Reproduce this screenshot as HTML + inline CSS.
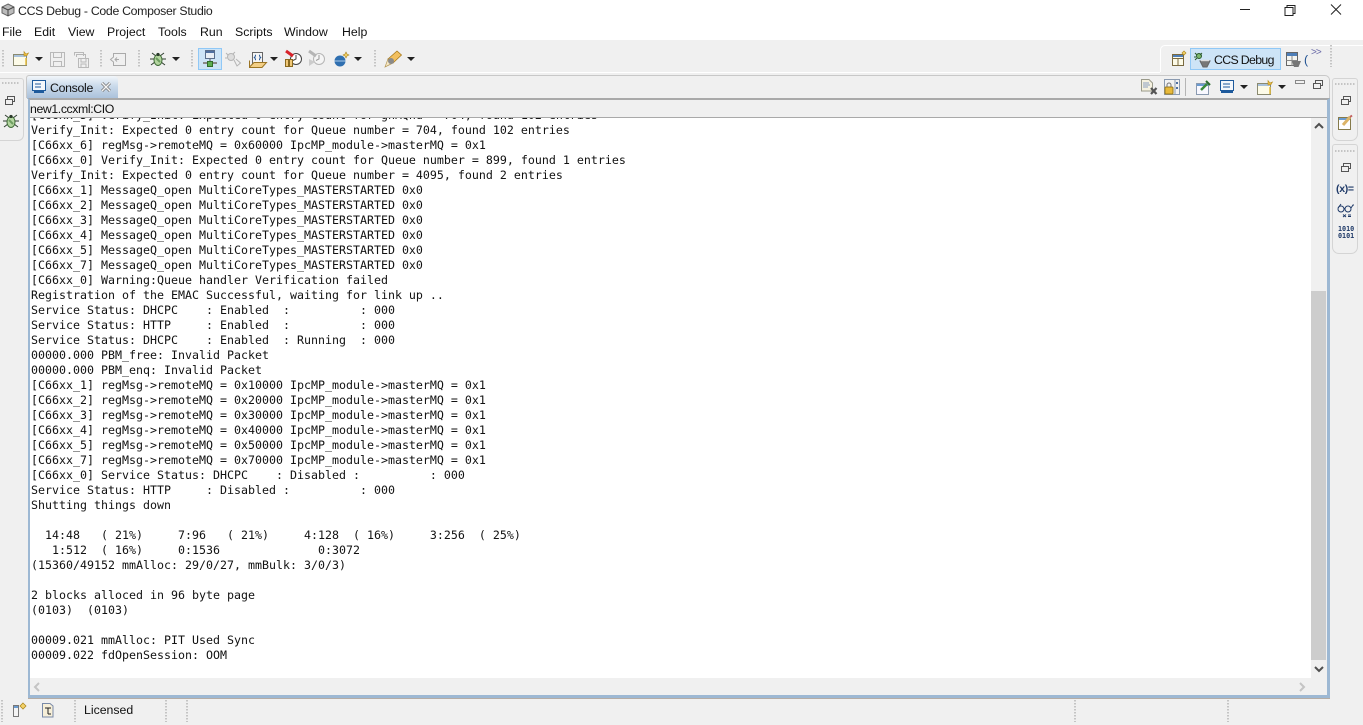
<!DOCTYPE html>
<html><head><meta charset="utf-8"><style>
html,body{margin:0;padding:0;width:1363px;height:725px;overflow:hidden;background:#f0f0f0;font-family:"Liberation Sans",sans-serif;color:#000}
.a{position:absolute}
svg{position:absolute;overflow:visible}
.m{position:absolute;top:24px;font-size:12.3px;line-height:16px;color:#111}
pre{position:absolute;margin:0;font-family:"DejaVu Sans Mono",monospace;font-size:11.63px;line-height:15px;color:#111;white-space:pre}
.g{position:absolute;width:2px;background-image:linear-gradient(#c4c4c4 50%,transparent 50%);background-size:2px 3px}
.tri{position:absolute;width:0;height:0;border-left:4px solid transparent;border-right:4px solid transparent;border-top:4px solid #222}
</style></head><body>
<div class="a" style="left:0;top:0;width:1363px;height:40px;background:#fff"></div>
<svg style="left:1px;top:3px" width="14" height="14" viewBox="0 0 14 14"><path d="M7 1L13 4V10L7 13L1 10V4Z" fill="#bbb" stroke="#666"/><path d="M1 4L7 7L13 4M7 7V13" fill="none" stroke="#444"/></svg>
<div class="a" style="left:18px;top:3px;font-size:12.3px;line-height:16px;color:#222;letter-spacing:-.31px">CCS Debug - Code Composer Studio</div>
<svg style="left:1240px;top:4px" width="115" height="14" viewBox="0 0 115 14" fill="none" stroke="#222"><path d="M0 5.500H10"/><path d="M45 3.500H53V11.500H45ZM47 3.500V1.500H55V9.500H53"/><path d="M91 0.500L101 10.500M101 0.500L91 10.500"/></svg>

<div class="m" style="left:2px">File</div><div class="m" style="left:34px">Edit</div><div class="m" style="left:68px">View</div><div class="m" style="left:107px">Project</div><div class="m" style="left:158px">Tools</div><div class="m" style="left:200px">Run</div><div class="m" style="left:235px">Scripts</div><div class="m" style="left:284px">Window</div><div class="m" style="left:342px">Help</div>

<!-- toolbar grips -->
<div class="g" style="left:2px;top:50px;height:18px"></div><div class="g" style="left:100px;top:50px;height:18px"></div><div class="g" style="left:138px;top:50px;height:18px"></div><div class="g" style="left:191px;top:50px;height:18px"></div><div class="g" style="left:374px;top:50px;height:18px"></div>

<!-- toolbar icons -->
<svg style="left:13px;top:51px" width="16" height="16" viewBox="0 0 16 16"><rect x="0.500" y="3.500" width="13" height="11" fill="#fdfbe8" stroke="#8a8a70"/><rect x="1" y="4" width="12" height="2" fill="#a9c2dc"/><path d="M13 14V7" stroke="#e5bd3f" stroke-width="1.500"/><path d="M11 .5L13 3 15.500 2 14 4.500 11 5Z" fill="#f0c040" stroke="#b58b1c" stroke-width=".6"/></svg>
<div class="tri" style="left:35px;top:57px"></div>
<svg style="left:50px;top:52px" width="39" height="16" viewBox="0 0 39 16" fill="none" stroke="#b9b9b9"><path d="M.5 .5H14.500V14.500H.5ZM3.500 .5V5.500H11.500V.5M3.500 14.500V9.500H11.500V14.500"/><path d="M24.500 3.500V.5H33.500V4M26.500 5V2.500H35.500V6M28.500 6.500H38.500V15.500H28.500ZM31 6.500V10H36V6.500M31 15.500V12H36V15.500"/></svg>
<svg style="left:110px;top:53px" width="16" height="14" viewBox="0 0 16 14" fill="none" stroke="#aaa"><path d="M3.500 .5H15.500V12.500H3.500V9L.5 6.500 3.500 4Z"/><path d="M5 6.500H9M7 4.500L5 6.500 7 8.500"/></svg>
<svg style="left:150px;top:51px" width="16" height="16" viewBox="0 0 16 16"><path d="M2 2L6 5M14 2L10 5M0 8H4M16 8H12M1 14L5 11M15 14L11 11" stroke="#2f3d2f"/><ellipse cx="8" cy="9" rx="4" ry="5.500" fill="#b4d6a0" stroke="#3d6a35"/><path d="M6 7L10 11" stroke="#6e9e60" stroke-width="2"/><circle cx="8" cy="3.500" r="1.600" fill="#2b3a2b"/></svg>
<div class="tri" style="left:172px;top:57px"></div>
<div class="a" style="left:198px;top:48px;width:22px;height:20px;background:#cde4f7;border:1px solid #90c8f6"></div>
<svg style="left:203px;top:50px" width="14" height="18" viewBox="0 0 14 18"><rect x="2.500" y=".5" width="9" height="8" fill="#e8eef5" stroke="#5a6e8c"/><rect x="3" y="1" width="8" height="2" fill="#4f6fa0"/><path d="M0 13H14" stroke="#8a8a8a" stroke-width="2"/><path d="M7 9V11" stroke="#555"/><rect x="4.500" y="11.500" width="5" height="5" fill="#5cae52" stroke="#2f6b2b"/></svg>
<svg style="left:225px;top:51px" width="17" height="17" viewBox="0 0 17 17" fill="none" stroke="#b5b5b5"><circle cx="6" cy="6" r="3.500" fill="#ddd"/><path d="M1 2L3 4M10 1L8 3M0 7H2M9 9L12 15 15.500 12 11 8"/></svg>
<svg style="left:249px;top:52px" width="18" height="16" viewBox="0 0 18 16"><rect x="3.500" y=".5" width="10" height="11" fill="#f5f5f5" stroke="#666"/><path d="M7 3C6 3 6.500 5 5.500 5.500 6.500 6 6 8 7 8M10 3C11 3 10.500 5 11.500 5.500 10.500 6 11 8 10 8" fill="none" stroke="#1d4f91"/><path d="M.5 8.500V15.500H13L17.500 10.500H5L.5 15" fill="#f3cf86" stroke="#9b7423"/></svg>
<div class="tri" style="left:270px;top:57px"></div>
<svg style="left:285px;top:50px" width="17" height="18" viewBox="0 0 17 18"><circle cx="11" cy="9" r="5.500" fill="#fff" stroke="#444"/><path d="M11 5V9L8 10.500" fill="none" stroke="#444"/><path d="M1 1L8 6" stroke="#d8232a" stroke-width="3"/><rect x=".5" y="9.500" width="3" height="7" fill="#f0c878" stroke="#8a6a20"/><rect x="4.500" y="9.500" width="3" height="7" fill="#f0c878" stroke="#8a6a20"/></svg>
<svg style="left:308px;top:50px" width="17" height="18" viewBox="0 0 17 18"><circle cx="11" cy="9" r="5.500" fill="#f5f5f5" stroke="#b5b5b5"/><path d="M11 5V9L8 10.500" fill="none" stroke="#999"/><path d="M1 1L8 6" stroke="#b5b5b5" stroke-width="3"/><path d="M1 9V16L7 12Z" fill="#ccc"/></svg>
<svg style="left:334px;top:51px" width="16" height="16" viewBox="0 0 16 16"><circle cx="6" cy="10" r="5.500" fill="#2f6fb0"/><path d="M.5 10H11.500" stroke="#a8c8e8"/><path d="M12 1L13 3 15 4 13 5 12 7 11 5 9 4 11 3Z" fill="#f3d26a" stroke="#a88320" stroke-width=".6"/></svg>
<div class="tri" style="left:354px;top:57px"></div>
<svg style="left:385px;top:50px" width="17" height="17" viewBox="0 0 17 17"><path d="M0 17L3 9 8 13Z" fill="#f7e8c6" stroke="#b59a5a" stroke-width=".7"/><path d="M3 9L12 1 16.500 5 8 13Z" fill="#f2bf5e" stroke="#a87a1c" stroke-width=".8"/><circle cx="6" cy="11" r="3" fill="#8a8a8a"/></svg>
<div class="tri" style="left:407px;top:57px"></div>

<!-- perspective switcher -->
<div class="a" style="left:1160px;top:45px;width:203px;height:27px;background:#f0f0f0;border:1px solid #fff;border-right:0;border-bottom:0;border-top-left-radius:5px;box-sizing:border-box"></div>
<div class="a" style="left:0;top:72px;width:1160px;height:1px;background:#fff"></div>
<svg style="left:1172px;top:51px" width="15" height="16" viewBox="0 0 15 16"><rect x=".5" y="3.500" width="11" height="11" fill="#fdfbe8" stroke="#7a6a40"/><path d="M.5 7.500H11.500M6 7.500V14.500" stroke="#7a6a40"/><rect x="1" y="4" width="10" height="2" fill="#4f7fb8"/><path d="M12 0L14 2 12 4 10 2Z" fill="#f3d26a" stroke="#b08a20" stroke-width=".7"/></svg>
<div class="a" style="left:1190px;top:48px;width:89px;height:20px;background:#cde4f7;border:1px solid #90c8f6"></div>
<svg style="left:1194px;top:52px" width="17" height="16" viewBox="0 0 17 16"><circle cx="5" cy="4" r="2.500" fill="#7cb86c" stroke="#2c5a2c"/><path d="M1 1L3 3M8 1L6 3M0 5H2M1 8L3 6" stroke="#2c5a2c"/><path d="M6 9H16L13 15H9Z" fill="#777" stroke="#666"/><path d="M7 8.500H15" stroke="#ddd" stroke-width="1.500"/></svg>
<div class="a" style="left:1214px;top:52px;font-size:12.300px;line-height:16px;color:#111;letter-spacing:-.65px">CCS Debug</div>
<svg style="left:1286px;top:52px" width="15" height="16" viewBox="0 0 15 16"><rect x=".5" y=".5" width="11" height="13" fill="#f5f5f0" stroke="#666"/><rect x="1" y="1" width="10" height="3" fill="#4f7fb8"/><path d="M.5 8.500H11.500M6 4V14" stroke="#888"/><path d="M6 9H15L12.500 15H8Z" fill="#777"/></svg>
<div class="a" style="left:1304px;top:52px;font-size:12.300px;line-height:16px;color:#1d4f91">(</div>
<div class="a" style="left:1311px;top:47px;font-size:10px;line-height:12px;color:#6a6aa8;letter-spacing:-1px">&gt;&gt;</div>
<div class="g" style="left:1330px;top:45px;height:22px"></div>

<!-- left trim -->
<div class="a" style="left:0;top:78px;width:24px;height:63px;box-sizing:border-box;border:1px solid #d4d4d4;border-left:0;border-bottom-right-radius:6px;border-top-right-radius:3px"></div>
<div class="a" style="left:2px;top:82px;width:18px;height:2px;background-image:linear-gradient(90deg,#c4c4c4 50%,transparent 50%);background-size:3px 2px"></div>
<svg style="left:5px;top:96px" width="10" height="9" viewBox="0 0 10 9" fill="none" stroke="#555"><path d="M.5 3.500H7.500V8.500H.5ZM2.500 3V.5H9.500V5.500H8"/></svg>
<svg style="left:3px;top:113px" width="16" height="16" viewBox="0 0 16 16"><path d="M2 2L6 5M14 2L10 5M0 8H4M16 8H12M1 14L5 11M15 14L11 11" stroke="#2f3d2f"/><ellipse cx="8" cy="9" rx="4" ry="5.500" fill="#b4d6a0" stroke="#3d6a35"/><path d="M6 7L10 11" stroke="#6e9e60" stroke-width="2"/><circle cx="8" cy="3.500" r="1.600" fill="#2b3a2b"/></svg>

<!-- main panel -->
<div class="a" style="left:26px;top:75px;width:1304px;height:23px;border:1px solid #c8c8c8;border-bottom:0;border-top-right-radius:5px;border-top-left-radius:3px;box-sizing:border-box"></div>
<div class="a" style="left:27px;top:76px;width:91px;height:23px;background:linear-gradient(#f2f6fa,#c9d9ea 45%,#a9c0da);border-top-left-radius:3px;border-top-right-radius:4px"></div>
<svg style="left:32px;top:80px" width="14" height="14" viewBox="0 0 14 14"><rect x=".5" y=".5" width="13" height="10" fill="#f4f7fb" stroke="#1e5a9c"/><path d="M3 4H9M3 7H9" stroke="#1e5a9c"/><rect x="2" y="11" width="10" height="2" fill="#1e5a9c"/></svg>
<div class="a" style="left:50px;top:80px;font-size:12.300px;line-height:16px;color:#111;letter-spacing:-.3px">Console</div>
<svg style="left:101px;top:82px" width="10" height="10" viewBox="0 0 10 10"><path d="M1 1L9 9M9 1L1 9" stroke="#777" stroke-width="3"/><path d="M1 1L9 9M9 1L1 9" stroke="#f4f4f4" stroke-width="1.400"/></svg>

<div class="a" style="left:28px;top:98px;width:1302px;height:600px;background:#f0f0f0;box-sizing:border-box;border:2px solid #9db8d3;border-top:2px solid #a9a9a9;border-right:3px solid #9db8d3;border-bottom:3px solid #9db8d3"></div>
<div class="a" style="left:28px;top:698px;width:1302px;height:1px;background:#b5aca4"></div>
<div class="a" style="left:30px;top:117px;width:1297px;height:1px;background:#a9a9a9"></div>
<div class="a" style="left:30px;top:118px;width:1281px;height:560px;background:#fff"></div>
<div class="a" style="left:30px;top:101px;font-size:12.300px;line-height:16px;color:#111;letter-spacing:-.4px">new1.ccxml:CIO</div>

<div class="a" style="left:30px;top:118px;width:1281px;height:560px;overflow:hidden"><pre style="left:1px;top:-10px">[C66xx_5] Verify_Init: Expected 0 entry count for gnMQnd = 704, found 102 entries
Verify_Init: Expected 0 entry count for Queue number = 704, found 102 entries
[C66xx_6] regMsg-&gt;remoteMQ = 0x60000 IpcMP_module-&gt;masterMQ = 0x1
[C66xx_0] Verify_Init: Expected 0 entry count for Queue number = 899, found 1 entries
Verify_Init: Expected 0 entry count for Queue number = 4095, found 2 entries
[C66xx_1] MessageQ_open MultiCoreTypes_MASTERSTARTED 0x0
[C66xx_2] MessageQ_open MultiCoreTypes_MASTERSTARTED 0x0
[C66xx_3] MessageQ_open MultiCoreTypes_MASTERSTARTED 0x0
[C66xx_4] MessageQ_open MultiCoreTypes_MASTERSTARTED 0x0
[C66xx_5] MessageQ_open MultiCoreTypes_MASTERSTARTED 0x0
[C66xx_7] MessageQ_open MultiCoreTypes_MASTERSTARTED 0x0
[C66xx_0] Warning:Queue handler Verification failed
Registration of the EMAC Successful, waiting for link up ..
Service Status: DHCPC    : Enabled  :          : 000
Service Status: HTTP     : Enabled  :          : 000
Service Status: DHCPC    : Enabled  : Running  : 000
00000.000 PBM_free: Invalid Packet
00000.000 PBM_enq: Invalid Packet
[C66xx_1] regMsg-&gt;remoteMQ = 0x10000 IpcMP_module-&gt;masterMQ = 0x1
[C66xx_2] regMsg-&gt;remoteMQ = 0x20000 IpcMP_module-&gt;masterMQ = 0x1
[C66xx_3] regMsg-&gt;remoteMQ = 0x30000 IpcMP_module-&gt;masterMQ = 0x1
[C66xx_4] regMsg-&gt;remoteMQ = 0x40000 IpcMP_module-&gt;masterMQ = 0x1
[C66xx_5] regMsg-&gt;remoteMQ = 0x50000 IpcMP_module-&gt;masterMQ = 0x1
[C66xx_7] regMsg-&gt;remoteMQ = 0x70000 IpcMP_module-&gt;masterMQ = 0x1
[C66xx_0] Service Status: DHCPC    : Disabled :          : 000
Service Status: HTTP     : Disabled :          : 000
Shutting things down

  14:48   ( 21%)     7:96   ( 21%)     4:128  ( 16%)     3:256  ( 25%)
   1:512  ( 16%)     0:1536              0:3072
(15360/49152 mmAlloc: 29/0/27, mmBulk: 3/0/3)

2 blocks alloced in 96 byte page
(0103)  (0103)

00009.021 mmAlloc: PIT Used Sync
00009.022 fdOpenSession: OOM</pre></div>

<!-- scrollbars -->
<div class="a" style="left:1311px;top:291px;width:15px;height:369px;background:#cdcdcd"></div>
<svg style="left:1313px;top:122px" width="12" height="8" viewBox="0 0 12 8" fill="none" stroke="#505050" stroke-width="2"><path d="M2 6L6 2 10 6"/></svg>
<svg style="left:1313px;top:665px" width="12" height="8" viewBox="0 0 12 8" fill="none" stroke="#505050" stroke-width="2"><path d="M2 2L6 6 10 2"/></svg>
<svg style="left:33px;top:681px" width="8" height="12" viewBox="0 0 8 12" fill="none" stroke="#c4c4c4" stroke-width="2"><path d="M6 2L2 6 6 10"/></svg>
<svg style="left:1298px;top:681px" width="8" height="12" viewBox="0 0 8 12" fill="none" stroke="#c4c4c4" stroke-width="2"><path d="M2 2L6 6 2 10"/></svg>

<!-- console toolbar -->
<svg style="left:1141px;top:79px" width="17" height="16" viewBox="0 0 17 16"><path d="M.5 .5H8L11.500 4V12H.5Z" fill="#f5f1e0" stroke="#9a9a8a"/><path d="M2 4H8M2 6H9M2 8H7" stroke="#8aa0c0"/><path d="M10 9L15.500 15M15.500 9L10 15" stroke="#555" stroke-width="2.200"/></svg>
<svg style="left:1164px;top:79px" width="16" height="17" viewBox="0 0 16 17"><rect x=".5" y=".5" width="15" height="15" fill="#f2f2f2" stroke="#8a9ab0"/><path d="M11 1V15" stroke="#8a9ab0"/><rect x="12" y="3" width="2" height="2" fill="#4f6fa0"/><rect x="12" y="8" width="2" height="2" fill="#4f6fa0"/><rect x="1" y="8" width="8" height="7" rx="1" fill="#e8b93a" stroke="#9a7a1c"/><path d="M3 8V6A2 2 0 0 1 7 6V8" fill="none" stroke="#777"/></svg>
<div class="a" style="left:1185px;top:78px;width:1px;height:18px;background:#b5b5b5"></div>
<svg style="left:1196px;top:80px" width="15" height="15" viewBox="0 0 15 15"><rect x=".5" y="3.500" width="12" height="11" fill="#f8f8ff" stroke="#8a9ab0"/><rect x="1" y="4" width="11" height="2" fill="#6a9bd0"/><path d="M5 10L11 4" stroke="#3a8a3a" stroke-width="2.500"/><path d="M10 1L14 5" stroke="#2c6a2c" stroke-width="2"/></svg>
<svg style="left:1220px;top:80px" width="14" height="14" viewBox="0 0 14 14"><rect x=".5" y=".5" width="13" height="10" fill="#f4f7fb" stroke="#1e5a9c"/><path d="M3 4H10M3 7H10" stroke="#1e5a9c"/><rect x="1" y="11" width="12" height="2" fill="#1e5a9c"/></svg>
<div class="tri" style="left:1240px;top:85px"></div>
<svg style="left:1257px;top:80px" width="16" height="15" viewBox="0 0 16 15"><rect x=".5" y="3.500" width="13" height="11" fill="#fdfbe8" stroke="#8a8a70"/><rect x="1" y="4" width="12" height="2" fill="#a9c2dc"/><path d="M13 14V7" stroke="#e5bd3f" stroke-width="1.500"/><path d="M11 .5L13 3 15.500 2 14 4.500 11 5Z" fill="#f0c040" stroke="#b58b1c" stroke-width=".6"/></svg>
<div class="tri" style="left:1278px;top:85px"></div>
<svg style="left:1295px;top:80px" width="30" height="9" viewBox="0 0 30 9" fill="none" stroke="#555"><path d="M.5 .5H9.500V3.500H.5Z" stroke="#888"/><path d="M18.500 3.500H25.500V8.500H18.500ZM20.500 3V.5H27.500V5.500H26"/></svg>

<!-- right trim -->
<div class="a" style="left:1332px;top:78px;width:26px;height:63px;box-sizing:border-box;border:1px solid #d4d4d4;border-top:1px solid #d4d4d4;border-radius:3px 3px 7px 7px"></div>
<div class="a" style="left:1335px;top:83px;width:20px;height:2px;background-image:linear-gradient(90deg,#c4c4c4 50%,transparent 50%);background-size:3px 2px"></div>
<svg style="left:1341px;top:96px" width="10" height="9" viewBox="0 0 10 9" fill="none" stroke="#555"><path d="M.5 3.500H7.500V8.500H.5ZM2.500 3V.5H9.500V5.500H8"/></svg>
<svg style="left:1338px;top:115px" width="15" height="15" viewBox="0 0 15 15"><rect x=".5" y="2.500" width="12" height="12" fill="#fff" stroke="#857a4a"/><rect x="1" y="3" width="11" height="2" fill="#6a9bd0"/><path d="M5 10L12 2" stroke="#dcb468" stroke-width="3"/><path d="M12 2L14 .5" stroke="#c26060" stroke-width="2"/></svg>
<div class="a" style="left:1332px;top:144px;width:26px;height:110px;box-sizing:border-box;border:1px solid #d4d4d4;border-radius:3px 3px 7px 7px"></div>
<div class="a" style="left:1335px;top:150px;width:20px;height:2px;background-image:linear-gradient(90deg,#c4c4c4 50%,transparent 50%);background-size:3px 2px"></div>
<svg style="left:1341px;top:163px" width="10" height="9" viewBox="0 0 10 9" fill="none" stroke="#555"><path d="M.5 3.500H7.500V8.500H.5ZM2.500 3V.5H9.500V5.500H8"/></svg>
<div class="a" style="left:1336px;top:182px;font-size:10.500px;line-height:14px;font-weight:bold;color:#1f3a68;letter-spacing:-.3px">(x)=</div>
<svg style="left:1337px;top:203px" width="18" height="14" viewBox="0 0 18 14" fill="none" stroke="#1f3a68"><circle cx="4" cy="6" r="3"/><circle cx="11" cy="6" r="3"/><path d="M7 5.500H8M1 5L4 1M14 5L16 2H17M6 11.500L9 14M9 11.500L6 14M11 12H14M11 13.500H14"/></svg>
<div class="a" style="left:1338px;top:226px;width:16px;font:bold 6.800px/6.500px 'DejaVu Sans Mono',monospace;color:#1f3a68;letter-spacing:-.05px">1010<br>0101</div>

<!-- status bar -->
<div class="g" style="left:1px;top:700px;height:22px"></div><div class="g" style="left:74px;top:700px;height:22px"></div><div class="g" style="left:165px;top:700px;height:22px"></div><div class="g" style="left:186px;top:700px;height:22px"></div><div class="g" style="left:1074px;top:700px;height:22px"></div><div class="g" style="left:1227px;top:700px;height:22px"></div>
<svg style="left:13px;top:702px" width="15" height="16" viewBox="0 0 15 16"><rect x=".5" y="3.500" width="5" height="11" fill="#f4f4f4" stroke="#777"/><rect x="1" y="4" width="4" height="2" fill="#6a9bd0"/><path d="M10 1L13 4 10 7 7 4Z" fill="#f3d26a" stroke="#b08a20" stroke-width=".8"/></svg>
<svg style="left:42px;top:703px" width="12" height="15" viewBox="0 0 12 15"><path d="M.5 .5H8L11 3V14H.5Z" fill="#f7efd8" stroke="#7a8aa8"/><path d="M3 5H9M6 5V11M6 11H9" stroke="#222"/></svg>
<div class="a" style="left:84px;top:702px;font-size:12.300px;line-height:16px;color:#111">Licensed</div>
</body></html>
